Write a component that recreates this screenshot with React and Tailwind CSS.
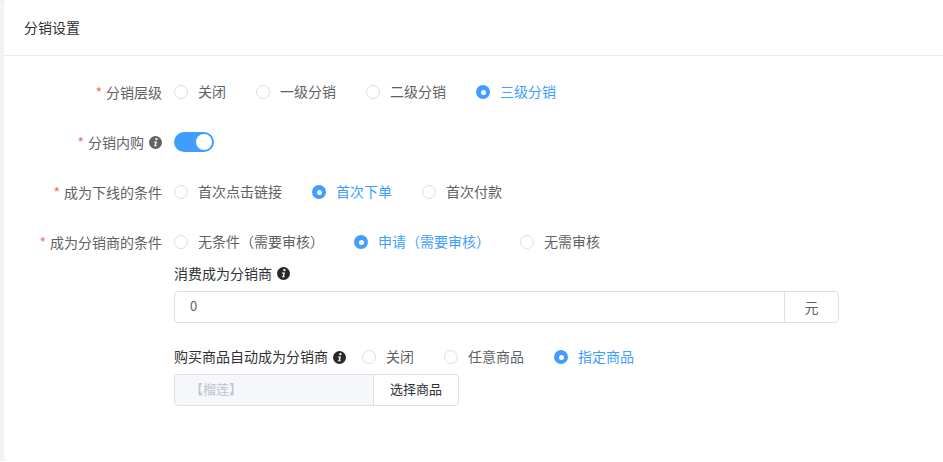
import { useState } from "react";

const font = "font-['Noto_Sans_CJK_SC','Liberation_Sans',sans-serif]";

function InfoIcon({ dark }) {
  return (
    <svg width="13" height="13" viewBox="0 0 13 13" className="shrink-0">
      <circle cx="6.5" cy="6.5" r="6.5" fill={dark ? "#26282c" : "#616266"} />
      <circle cx="7.4" cy="3.2" r="1.15" fill="#fff" />
      <path d="M5 5.5h3L7 9.4h.9l-.2.9H4.7l.2-.9h.7l.8-3H4.8z" fill="#fff" />
    </svg>
  );
}

function Radio({ label, checked }) {
  return (
    <label className="mr-[30px] flex items-center gap-[10px]">
      {checked ? (
        <span className="flex h-[14px] w-[14px] items-center justify-center rounded-full bg-[#409eff]">
          <span className="h-[5px] w-[5px] rounded-full bg-white" />
        </span>
      ) : (
        <span className="h-[14px] w-[14px] rounded-full border border-[#dcdfe6] bg-white" />
      )}
      <span className={`pb-[2px] ${checked ? "text-[#409eff]" : "text-[#606266]"}`}>{label}</span>
    </label>
  );
}

function RadioGroup({ options, active }) {
  return (
    <div className="flex items-center">
      {options.map((o) => (
        <Radio key={o} label={o} checked={o === active} />
      ))}
    </div>
  );
}

function FormRow({ label, info, children }) {
  return (
    <div className="flex h-[20px] items-center">
      <div className="flex w-[158px] shrink-0 items-center justify-end text-[#606266]">
        <span className="mr-[4px] text-[#f56c6c]">*</span>
        {label}
        {info && (
          <span className="ml-[5px]">
            <InfoIcon />
          </span>
        )}
      </div>
      <div className="ml-[12px] flex items-center">{children}</div>
    </div>
  );
}

export default function App() {
  const [on, setOn] = useState(true);

  return (
    <div className={`${font} h-[462px] w-[943px] overflow-hidden bg-white text-[14px] leading-[20px]`}>
      <div className="h-[461px] bg-[#f0f2f5] pl-[4px]">
        <div className="h-full rounded-l-[4px] bg-white">
          <div className="flex h-[56px] items-center border-b border-[#ebeef5] pb-[2px] pl-[20px] text-[#303133]">
            分销设置
          </div>

          <div className="space-y-[30px] pt-[26px]">
            <FormRow label="分销层级">
              <RadioGroup options={["关闭", "一级分销", "二级分销", "三级分销"]} active="三级分销" />
            </FormRow>

            <FormRow label="分销内购" info>
              <button
                onClick={() => setOn(!on)}
                className={`flex h-[20px] w-[40px] items-center rounded-full px-[2px] ${on ? "justify-end bg-[#409eff]" : "justify-start bg-[#dcdfe6]"}`}
              >
                <span className="h-[16px] w-[16px] rounded-full bg-white" />
              </button>
            </FormRow>

            <FormRow label="成为下线的条件">
              <RadioGroup options={["首次点击链接", "首次下单", "首次付款"]} active="首次下单" />
            </FormRow>

            <FormRow label="成为分销商的条件">
              <RadioGroup options={["无条件（需要审核）", "申请（需要审核）", "无需审核"]} active="申请（需要审核）" />
            </FormRow>
          </div>

          <div className="ml-[170px] mt-[11px] w-[665px]">
            <div className="flex h-[20px] items-center gap-[5px] text-[#303133]">
              消费成为分销商
              <InfoIcon dark />
            </div>

            {/* Amount input */}
            <div className="mt-[8px] flex h-[32px] rounded-[4px] border border-[#dcdfe6] text-[#606266]">
              <div className="flex flex-1 items-center pb-[3px] pl-[15px] text-[13px]">0</div>
              <div className="flex w-[54px] items-center justify-center border-l border-[#dcdfe6]">元</div>
            </div>

            <div className="mt-[24px] flex h-[20px] items-center text-[#303133]">
              <span className="pb-[2px]">购买商品自动成为分销商</span>
              <span className="ml-[5px] mr-[16px]">
                <InfoIcon dark />
              </span>
              <RadioGroup options={["关闭", "任意商品", "指定商品"]} active="指定商品" />
            </div>

            {/* Product picker */}
            <div className="mt-[7px] flex h-[32px] w-[285px] rounded-[4px] border border-[#dcdfe6] text-[13px]">
              <div className="flex w-[198px] items-center rounded-l-[4px] bg-[#f5f7fa] pb-[2px] pl-[15px] text-[#c0c4cc]">
                【榴莲】
              </div>
              <div className="flex flex-1 items-center justify-center border-l border-[#dcdfe6] pb-[2px] text-[#303133]">
                选择商品
              </div>
            </div>
          </div>
        </div>
      </div>
    </div>
  );
}
